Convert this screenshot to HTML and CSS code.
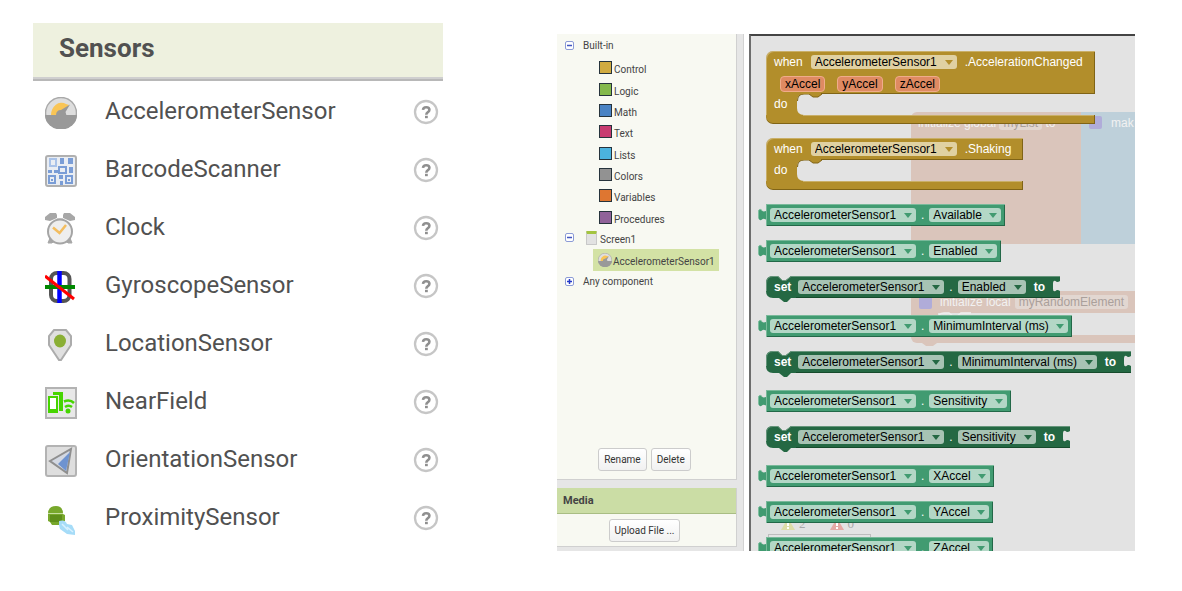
FILE: index.html
```html
<!DOCTYPE html>
<html lang="en">
<head>
<meta charset="utf-8">
<title>Sensors</title>
<link rel="stylesheet" href="styles.css">
</head>
<body>
<svg class="defs" aria-hidden="true">
  <symbol id="gauge" viewBox="0 0 32 32"><circle cx="16" cy="16" r="15.500" fill="#dedede" stroke="#a9a9a9" stroke-width="1.500"/><path d="M0 18H32A16 14.500 0 0 1 0 18Z" fill="#999"/><path d="M6 18A10.500 12 0 0 1 21 7L24 8 16 18Z" fill="#f9c556"/><path d="M11 18.500Q11 13 16 13L25 7.500 20.500 15 21.500 18.500Z" fill="#999"/></symbol>
  <symbol id="barcode" viewBox="0 0 32 32"><rect x="1" y="1" width="30" height="30" rx="2" fill="#e9edf3" stroke="#b0b0b0" stroke-width="2"/><g fill="none" stroke="#7a9dd6" stroke-width="2"><rect x="5" y="4" width="6" height="7" stroke="#a9c2e8"/><rect x="14" y="12" width="7" height="6"/><rect x="4" y="21" width="6" height="7"/><rect x="21" y="21" width="6" height="7"/></g><path d="M15 3h4v6h-4zM23 3h5v6h-5zM3 15h4v3H3zM9 15h4v3H9zM24 12h4v6h-4zM14 20h4v4h-4zM15 26h3v4h-3zM6 24h2v2H6zM23 24h2v2h-2z" fill="#7a9dd6"/></symbol>
  <symbol id="clock" viewBox="0 0 32 32"><path d="M0 7V4L5 0h6l1 2v3L5 8ZM30 7V4L25 0h-6l-1 2v3l7 3Z" fill="#a7a7a7"/><path d="M12 6h6M5 25 3 30h4l3-3zM25 25l2 5h-4l-3-3z" fill="#a7a7a7" stroke="#a7a7a7"/><circle cx="15" cy="18.500" r="12" fill="#eee" stroke="#a5a5a5" stroke-width="2"/><path d="M8 14.500 14.500 20 21 12" fill="none" stroke="#f3bd5f" stroke-width="2.500"/></symbol>
  <symbol id="gyro" viewBox="0 0 32 32"><rect x="6" y="2" width="18.500" height="28" rx="6" fill="#fff" stroke="#555" stroke-width="4"/><path d="M14.500 0v32" stroke="#00f" stroke-width="4.500"/><path d="M0 16h30" stroke="#080" stroke-width="4"/><path d="M0 5 29 28" stroke="red" stroke-width="3"/></symbol>
  <symbol id="pin" viewBox="0 0 32 32"><path d="M9 1h12l5 6v9L16 31h-2L4 16V7Z" fill="#e0e0e0" stroke="#acacac" stroke-width="2"/><ellipse cx="15" cy="12" rx="6" ry="6.500" fill="#8aaf35"/></symbol>
  <symbol id="nfc" viewBox="0 0 32 32"><rect x="1" y="1" width="30" height="30" fill="#e8e8e8" stroke="#b3b3b3" stroke-width="2"/><path d="M3 9H13V26H3ZM8 5H18V24H14V8H8Z" fill="#46d500"/><rect x="5" y="11" width="6" height="11" fill="#fff"/><path d="M19 14.500q6-2.500 10 1.500M20 20q4-2.500 7 0" fill="none" stroke="#46d500" stroke-width="2.500"/><circle cx="23" cy="24" r="2.500" fill="#46d500"/></symbol>
  <symbol id="orient" viewBox="0 0 32 32"><rect x="1" y="1" width="30" height="30" rx="2" fill="#dedede" stroke="#b3b3b3" stroke-width="2"/><path d="M5 16 26 4 22 28Z" fill="#d3d8e2" stroke="#8f8f8f" stroke-width="2"/><path d="M13 19 25 7 21 26Z" fill="#6e93d0"/></symbol>
  <symbol id="prox" viewBox="0 0 32 32"><path d="M3 11Q3 3 11 3 18 3 18 11L20 12V18L18 19V21L14 22H7L5 19 3 18Z" fill="#78a82c"/><path d="M3 10.500h15" stroke="#c6dfa0"/><path d="M5 12h12v7H5z" fill="#5f8f1b"/><path d="M14 18q6-2 8 3l5 1 3 6v4l-8-1-7-5-1-4Z" fill="#a6dcf8"/><path d="M17 21l6 6M22 24l6 5" stroke="#d8f1ff" stroke-width="1.500"/></symbol>
  <symbol id="help" viewBox="0 0 26 26"><circle cx="13" cy="13" r="11" fill="#fff" stroke="#c6c6c6" stroke-width="2.300"/><path d="M10 10.800Q10.200 8.200 13.200 8.200q3.200 0 3.200 2.500 0 1.500-1.500 2.400-1.600 1-1.600 2.600" fill="none" stroke="#8f8f8f" stroke-width="2.600"/><rect x="12" y="16.800" width="2.800" height="2.400" fill="#8f8f8f"/></symbol>
  <symbol id="minus" viewBox="0 0 9 9"><rect x=".5" y=".5" width="8" height="8" rx="1.500" fill="#fff" stroke="#8c9bd6"/><path d="M2 4.500h5" stroke="#4356c0" stroke-width="1.500"/></symbol>
  <symbol id="plus" viewBox="0 0 9 9"><rect x=".5" y=".5" width="8" height="8" rx="1.500" fill="#fff" stroke="#8c9bd6"/><path d="M2 4.500h5M4.500 2v5" stroke="#2338c8" stroke-width="1.500"/></symbol>
  <symbol id="tab" viewBox="0 0 8 16"><path d="M8 4Q5 5 4 3.500 2 1 .5 3.500V11.500Q2 14.500 4 12.500 5 11 8 12.500Z" fill="#419b71"/><path d="M.5 11V3.500Q2 1 4 3.500" fill="none" stroke="#7fbf9f"/></symbol>
  <symbol id="setcap" viewBox="0 0 30 27"><path d="M30 0H25L20 4H16L12 0H7Q0 0 0 7V15Q0 22 7 22H13L18 26H21L25 22H30Z" fill="#246843"/><path d="M.5 15V7Q.5 .5 7 .5H12L16 4.500H20L25 .5H30" fill="none" stroke="#66957b"/></symbol>
  <symbol id="socket" viewBox="0 0 8 22"><path d="M0 0H8V5Q5 7 3.500 5 1 4 1 8V13Q1 16 3.500 15 5 13 8 15V22H0Z" fill="#246843"/><path d="M0 .5H8" stroke="#66957b"/><path d="M0 21.500H8" stroke="#164b2c"/></symbol>
  <symbol id="mouth" viewBox="0 0 32 21"><path d="M0 0H25L21 3H16L12 0H7Q0 0 0 7V14Q0 21 7 21H0Z" fill="#b28e2b"/><path d="M25 0 21 3H16L12 0H7Q.5 0 .5 7" fill="none" stroke="#806416"/></symbol>
</svg>

<main class="page">
  <section class="palette">
    <h1 class="palette-title">Sensors</h1>
    <ul class="sensors">
      <li class="sensor"><svg class="sensor-icon"><use href="#gauge"/></svg><span class="sensor-name">AccelerometerSensor</span><button class="help" aria-label="Help"><svg><use href="#help"/></svg></button></li>
      <li class="sensor"><svg class="sensor-icon"><use href="#barcode"/></svg><span class="sensor-name">BarcodeScanner</span><button class="help" aria-label="Help"><svg><use href="#help"/></svg></button></li>
      <li class="sensor"><svg class="sensor-icon"><use href="#clock"/></svg><span class="sensor-name">Clock</span><button class="help" aria-label="Help"><svg><use href="#help"/></svg></button></li>
      <li class="sensor"><svg class="sensor-icon"><use href="#gyro"/></svg><span class="sensor-name">GyroscopeSensor</span><button class="help" aria-label="Help"><svg><use href="#help"/></svg></button></li>
      <li class="sensor"><svg class="sensor-icon"><use href="#pin"/></svg><span class="sensor-name">LocationSensor</span><button class="help" aria-label="Help"><svg><use href="#help"/></svg></button></li>
      <li class="sensor"><svg class="sensor-icon"><use href="#nfc"/></svg><span class="sensor-name">NearField</span><button class="help" aria-label="Help"><svg><use href="#help"/></svg></button></li>
      <li class="sensor"><svg class="sensor-icon"><use href="#orient"/></svg><span class="sensor-name">OrientationSensor</span><button class="help" aria-label="Help"><svg><use href="#help"/></svg></button></li>
      <li class="sensor"><svg class="sensor-icon"><use href="#prox"/></svg><span class="sensor-name">ProximitySensor</span><button class="help" aria-label="Help"><svg><use href="#help"/></svg></button></li>
    </ul>
  </section>

  <section class="editor">
    <aside class="side">
      <div class="tree">
        <div class="branch"><svg class="toggle"><use href="#minus"/></svg><span>Built-in</span></div>
        <ul class="drawers">
          <li class="drawer"><i class="swatch control"></i><span>Control</span></li>
          <li class="drawer"><i class="swatch logic"></i><span>Logic</span></li>
          <li class="drawer"><i class="swatch math"></i><span>Math</span></li>
          <li class="drawer"><i class="swatch text"></i><span>Text</span></li>
          <li class="drawer"><i class="swatch lists"></i><span>Lists</span></li>
          <li class="drawer"><i class="swatch colors"></i><span>Colors</span></li>
          <li class="drawer"><i class="swatch variables"></i><span>Variables</span></li>
          <li class="drawer"><i class="swatch procedures"></i><span>Procedures</span></li>
        </ul>
        <div class="branch screen"><svg class="toggle"><use href="#minus"/></svg><i class="phone"></i><span>Screen1</span></div>
        <div class="selected"><svg class="mini"><use href="#gauge"/></svg><span>AccelerometerSensor1</span></div>
        <div class="branch"><svg class="toggle"><use href="#plus"/></svg><span>Any component</span></div>
        <div class="actions"><button class="btn">Rename</button><button class="btn">Delete</button></div>
      </div>
      <div class="media">
        <h2 class="media-title">Media</h2>
        <div class="media-body"><button class="btn">Upload File ...</button></div>
      </div>
    </aside>

    <div class="workspace">
      <div class="ghost ghost-global"><span class="ghost-label">initialize global <b class="ghost-field">myList</b> to</span></div>
      <div class="ghost ghost-list"><i class="mutator"></i><span>mak</span></div>
      <div class="ghost ghost-local"><i class="mutator"></i><span>initialize local</span><b class="ghost-field">myRandomElement</b></div>
      <div class="ghost ghost-arm"></div>
      <div class="ghost ghost-foot"></div>
      <svg class="ghost ghost-bumps" viewBox="0 0 60 38"><path d="M11 38 15 41H22L26 38" fill="#dac5bb"/><path d="M27 14Q27 8 33 8H38L42 11H46L50 8H60" fill="none" stroke="#efefef" stroke-width="1.500"/></svg>
      <div class="ghost warnings"><svg class="warn" viewBox="0 0 14 12"><path d="M7 0 14 12H0Z" fill="#dddda8"/><path d="M7 4v4M7 9v2" stroke="#fff" stroke-width="2"/></svg><span>2</span><svg class="warn second" viewBox="0 0 14 12"><path d="M7 0 14 12H0Z" fill="#e5a9a5"/><path d="M7 4v4M7 9v2" stroke="#fff" stroke-width="2"/></svg><span>0</span></div>
      <div class="ghost warn-box"></div>

      <div class="flyout">
        <div class="event">
          <div class="event-head">
            <div class="line"><span>when</span><label class="field"><select aria-label="Component"><option>AccelerometerSensor1</option></select></label><span>.AccelerationChanged</span></div>
            <div class="params"><span class="param">xAccel</span><span class="param">yAccel</span><span class="param">zAccel</span></div>
          </div>
          <div class="event-do"><span class="do">do</span><svg class="mouth"><use href="#mouth"/></svg></div>
          <div class="event-foot"></div>
        </div>
        <div class="event">
          <div class="event-head">
            <div class="line"><span>when</span><label class="field"><select aria-label="Component"><option>AccelerometerSensor1</option></select></label><span>.Shaking</span></div>
          </div>
          <div class="event-do"><span class="do">do</span><svg class="mouth"><use href="#mouth"/></svg></div>
          <div class="event-foot"></div>
        </div>

        <div class="getter"><svg class="tab"><use href="#tab"/></svg><div class="getter-body"><label class="field"><select aria-label="Component"><option>AccelerometerSensor1</option></select></label><span>.</span><label class="field"><select aria-label="Property"><option>Available</option></select></label></div></div>
        <div class="getter"><svg class="tab"><use href="#tab"/></svg><div class="getter-body"><label class="field"><select aria-label="Component"><option>AccelerometerSensor1</option></select></label><span>.</span><label class="field"><select aria-label="Property"><option>Enabled</option></select></label></div></div>
        <div class="setter"><svg class="setcap"><use href="#setcap"/></svg><div class="setter-body"><span class="set">set</span><label class="field"><select aria-label="Component"><option>AccelerometerSensor1</option></select></label><span>.</span><label class="field"><select aria-label="Property"><option>Enabled</option></select></label><span class="to">to</span></div><svg class="socket"><use href="#socket"/></svg></div>
        <div class="getter"><svg class="tab"><use href="#tab"/></svg><div class="getter-body"><label class="field"><select aria-label="Component"><option>AccelerometerSensor1</option></select></label><span>.</span><label class="field"><select aria-label="Property"><option>MinimumInterval (ms)</option></select></label></div></div>
        <div class="setter"><svg class="setcap"><use href="#setcap"/></svg><div class="setter-body"><span class="set">set</span><label class="field"><select aria-label="Component"><option>AccelerometerSensor1</option></select></label><span>.</span><label class="field"><select aria-label="Property"><option>MinimumInterval (ms)</option></select></label><span class="to">to</span></div><svg class="socket"><use href="#socket"/></svg></div>
        <div class="getter"><svg class="tab"><use href="#tab"/></svg><div class="getter-body"><label class="field"><select aria-label="Component"><option>AccelerometerSensor1</option></select></label><span>.</span><label class="field"><select aria-label="Property"><option>Sensitivity</option></select></label></div></div>
        <div class="setter"><svg class="setcap"><use href="#setcap"/></svg><div class="setter-body"><span class="set">set</span><label class="field"><select aria-label="Component"><option>AccelerometerSensor1</option></select></label><span>.</span><label class="field"><select aria-label="Property"><option>Sensitivity</option></select></label><span class="to">to</span></div><svg class="socket"><use href="#socket"/></svg></div>
        <div class="getter"><svg class="tab"><use href="#tab"/></svg><div class="getter-body"><label class="field"><select aria-label="Component"><option>AccelerometerSensor1</option></select></label><span>.</span><label class="field"><select aria-label="Property"><option>XAccel</option></select></label></div></div>
        <div class="getter"><svg class="tab"><use href="#tab"/></svg><div class="getter-body"><label class="field"><select aria-label="Component"><option>AccelerometerSensor1</option></select></label><span>.</span><label class="field"><select aria-label="Property"><option>YAccel</option></select></label></div></div>
        <div class="getter"><svg class="tab"><use href="#tab"/></svg><div class="getter-body"><label class="field"><select aria-label="Component"><option>AccelerometerSensor1</option></select></label><span>.</span><label class="field"><select aria-label="Property"><option>ZAccel</option></select></label></div></div>
      </div>
    </div>
  </section>
</main>
</body>
</html>
```
FILE: styles.css
```css
* { box-sizing: border-box; }
body { margin: 0; background: #fff; font-family: Roboto, sans-serif; color: #515151; }
ul { list-style: none; margin: 0; padding: 0; }
button { font-family: inherit; cursor: pointer; }
.defs { position: absolute; width: 0; height: 0; }

.page {
  display: grid;
  grid-template-columns: 410fr 578fr;
  column-gap: 114px;
  height: 100vh;
  padding: 23px 47px 40px 33px;
}

/* Sensor palette */
.palette-title {
  margin: 0;
  padding: 9px 26px 15px;
  background: #eef1df;
  border-bottom: 2px solid #b8b8b8;
  box-shadow: inset 0 -2px #cfcfcf;
  font-size: 26px;
  line-height: 32px;
  font-weight: 700;
}
.sensors { padding: 3px 4px 0 12px; }
.sensor { display: flex; align-items: center; height: 58px; }
.sensor-icon { flex: none; width: 32px; height: 32px; }
.sensor-name { flex: 1; margin-left: 28px; padding-bottom: 4px; font-size: 24px; line-height: 32px; }
.help { padding: 0 0 2px; border: 0; background: none; }
.help svg { display: block; width: 26px; height: 26px; }

/* Blocks editor */
.editor { display: flex; margin-top: 11px; min-height: 0; overflow: hidden; font-size: 10px; color: #444; }
.side {
  flex: none;
  width: 187px;
  display: flex;
  flex-direction: column;
  gap: 8px;
  padding: 0 6px 4px 0;
  background: #e6e6e6;
  border-right: 1px solid #d2d2d2;
}
.tree, .media { background: #f8f9f2; border-right: 1px solid #d0d0d0; border-bottom: 1px solid #d0d0d0; }
.tree { flex: 1; display: flex; flex-direction: column; padding-top: 1px; }
.branch { display: flex; align-items: center; height: 20px; padding-left: 8px; }
.toggle { width: 9px; height: 9px; margin-right: 9px; }
.drawers { display: grid; grid-auto-rows: 1fr; height: 171px; margin-top: 2px; }
.drawer { display: flex; align-items: center; gap: 2px; padding-left: 42px; }
.drawer span { padding-top: 4px; }
.swatch { width: 13px; height: 13px; border: 1px solid #26333c; }
.control { background: #d1ab40; }
.logic { background: #84b94b; }
.math { background: #4a83c4; }
.text { background: #c83b70; }
.lists { background: #4bb3df; }
.colors { background: #929292; }
.variables { background: #de7631; }
.procedures { background: #906299; }
.phone { width: 11px; height: 14px; margin: 0 3px 0 3px; background: #e2e2e2; border: 1px solid #c8c8c8; border-top: 3px solid #a3c440; border-radius: 1px; }
.screen { height: 19px; }
.screen span { padding-top: 4px; }
.selected { display: flex; align-items: center; gap: 1px; align-self: flex-start; height: 22px; margin: 2px 0 0 36px; padding: 0 4px 0 5px; background: #d3e2a5; }
.selected span { padding-top: 3px; }
.mini { width: 14px; height: 14px; }
.actions { display: flex; justify-content: center; gap: 4px; margin-top: auto; padding: 0 4px 8px 0; }
.btn {
  height: 23px;
  padding: 0 5px;
  font-size: 10px;
  color: #333;
  background: linear-gradient(#fff, #f1f1f1);
  border: 1px solid #ccc;
  border-radius: 3px;
}
.media-title { margin: 0; padding: 0 6px; background: #cbdda5; border-bottom: 1px solid #a9bd84; font-size: 11px; line-height: 25px; }
.media-body { display: flex; justify-content: center; padding: 5px 4px 4px 0; }

.workspace {
  position: relative;
  flex: 1;
  min-width: 0;
  margin-left: 5px;
  overflow: hidden;
  background: #e3e3e3;
  border-left: 2px solid #6d6d6d;
  border-top: 2px solid #444;
  font-family: "Liberation Sans", Arial, sans-serif;
  font-size: 12px;
}

/* Workspace blocks behind the flyout */
.ghost { position: absolute; color: #f2f2f2; white-space: nowrap; }
.ghost-global { left: 160px; top: 76px; width: 170px; height: 132px; padding: 4px 7px; background: #dac5bb; border-radius: 6px 0 0 0; line-height: 14px; }
.ghost-field { padding: 0 4px; border-radius: 3px; background: #e2d7d1; color: #aaa09b; font-weight: 400; }
.ghost-list { left: 330px; top: 76px; right: 0; height: 132px; display: flex; align-items: flex-start; gap: 9px; padding: 4px 8px; background: #bed0da; line-height: 14px; }
.mutator { flex: none; width: 13px; height: 13px; border-radius: 2px; background: #b0acd9; }
.ghost-local { left: 160px; top: 255px; right: 0; height: 22px; display: flex; align-items: center; padding-left: 8px; background: #dac5bb; border-radius: 6px 0 0 0; }
.ghost-local span { margin: 0 4px 0 8px; }
.ghost-arm { left: 160px; top: 277px; width: 27px; height: 22px; background: #dac5bb; }
.ghost-foot { left: 160px; top: 299px; right: 0; height: 8px; background: #dac5bb; border-radius: 0 0 0 6px; }
.ghost-bumps { left: 160px; top: 269px; width: 60px; height: 38px; overflow: visible; }
.warnings { left: 30px; top: 480px; display: flex; align-items: center; gap: 4px; color: #aaa; font-family: "Liberation Serif", serif; font-size: 13px; }
.warn { width: 14px; height: 12px; }
.second { margin-left: 20px; }
.warn-box { left: 17px; top: 498px; width: 103px; height: 30px; border: 1px solid #bdbdbd; }

/* Flyout blocks */
.flyout { position: relative; display: flex; flex-direction: column; align-items: flex-start; gap: 14px; padding: 15px 0 0 15px; color: #fff; white-space: nowrap; }
.field { display: inline-grid; align-items: center; border-radius: 3px; }
.field select {
  grid-area: 1 / 1;
  appearance: none;
  height: 14px;
  margin: 0;
  padding: 0 19px 0 4px;
  border: 0;
  background: none;
  color: #000;
  font: inherit;
  line-height: 14px;
}
.field::after {
  content: "";
  grid-area: 1 / 1;
  justify-self: end;
  margin-right: 4px;
  border: 4px solid transparent;
  border-top: 5px solid currentColor;
  border-bottom: 0;
  pointer-events: none;
}

.event .field { background: #e0d1a2; color: #b28e2b; }
.event-head { background: linear-gradient(#806416, #806416) 55px 100% / 100% 1px no-repeat #b28e2b; border-radius: 7px 0 0 0; box-shadow: inset 1px 1px #c9af68, inset -1px 0 #806416; }
.line { display: flex; align-items: center; gap: 8px; height: 22px; padding: 0 12px 0 8px; }
.params { display: flex; align-items: center; gap: 12px; height: 21px; padding-left: 14px; }
.param { padding: 0 4px; border: 1px solid #efac8b; border-radius: 4px; background: #df8a62; color: #000; line-height: 14px; }
.event-do { display: flex; height: 21px; }
.do { width: 31px; padding-left: 8px; background: #b28e2b; box-shadow: inset 1px 0 #c9af68; line-height: 21px; }
.mouth { width: 32px; height: 21px; overflow: visible; }
.event-foot { height: 9px; background: linear-gradient(#c9af68, #c9af68) 37px 0 / 100% 1px no-repeat #b28e2b; border-radius: 0 0 0 7px; box-shadow: inset 0 -1px #806416, inset -1px 0 #806416; }

.getter { display: flex; align-items: flex-start; margin-left: -8px; }
.tab { width: 8px; height: 16px; margin-top: 3px; }
.getter-body, .setter-body { display: flex; align-items: center; height: 22px; }
.getter-body { gap: 5px; padding: 0 4px; background: #419b71; box-shadow: inset 1px 1px #79b99a, inset -1px -1px #236848; }
.getter .field { background: #b3d7c6; color: #419b71; }

.setter { position: relative; display: flex; margin-bottom: 3px; }
.setcap { position: absolute; left: 0; top: 0; width: 30px; height: 27px; }
.setter-body { position: relative; gap: 5px; padding: 0 4px 0 8px; background: linear-gradient(#66957b 1px, #246843 1px 21px, #164b2c 21px) 30px 0 no-repeat; }
.setter .field { background: #a7c3b4; color: #246843; }
.set { margin-right: 2px; font-weight: 700; }
.to { margin: 0 3px; font-weight: 700; }
.socket { width: 8px; height: 22px; }
```
